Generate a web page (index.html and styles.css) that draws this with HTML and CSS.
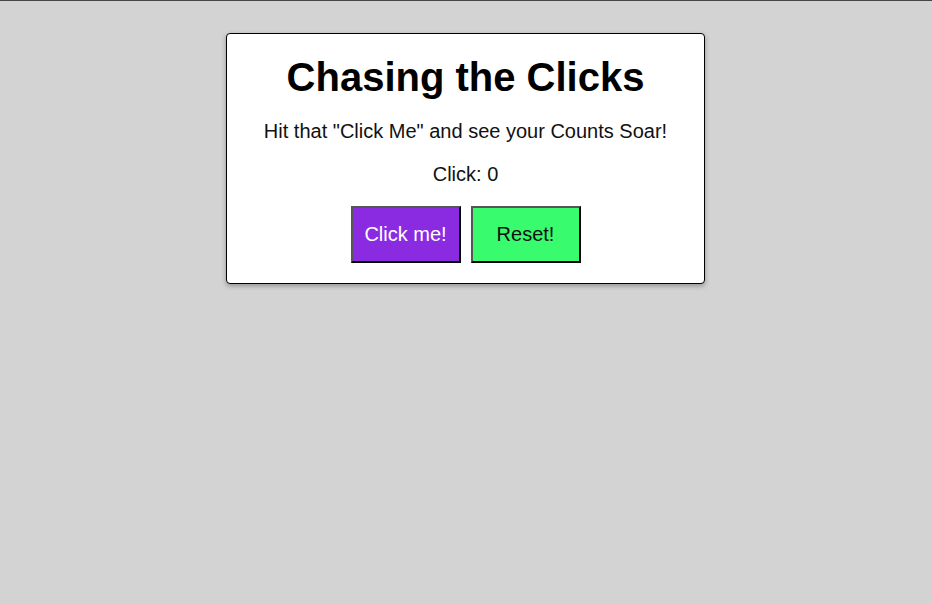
FILE: index.html
```html
<!DOCTYPE html>
<html lang="en">
<head>
<meta charset="utf-8">
<title>Chasing the Clicks</title>
<link rel="stylesheet" href="styles.css">
</head>
<body>
<div class="card">
  <h1 class="title">Chasing the Clicks</h1>
  <p class="subtitle">Hit that "Click Me" and see your Counts Soar!</p>
  <p class="count">Click: 0</p>
  <div class="actions">
    <button class="btn btn-click">Click me!</button>
    <button class="btn btn-reset">Reset!</button>
  </div>
</div>
</body>
</html>
```

FILE: styles.css
```css
html, body {
  margin: 0;
  padding: 0;
}
body {
  background: #d3d3d3;
  border-top: 1px solid #454545;
  min-height: 603px;
  font-family: "Liberation Sans", Arial, sans-serif;
}
.card {
  box-sizing: border-box;
  width: 479px;
  margin: 32px 0 0 calc(50% - 240px);
  padding: 21px 20px 20px;
  background: #fff;
  border: 1px solid #000;
  border-radius: 4px;
  box-shadow: 0 2px 5px rgba(0, 0, 0, 0.3);
  text-align: center;
}
.title {
  margin: 0;
  font-size: 40px;
  font-weight: bold;
  color: #000;
}
.subtitle, .count {
  margin: 20px 0;
  font-size: 20px;
  color: #111;
}
.actions {
  display: flex;
  justify-content: center;
  gap: 10px;
}
.btn {
  width: 110px;
  height: 57px;
  font-family: "Liberation Sans", Arial, sans-serif;
  font-size: 20px;
  border: 2px solid;
  border-color: #555 #000 #000 #555;
  padding: 0;
  cursor: pointer;
}
.btn-click {
  background: #8a2be2;
  color: #fff;
}
.btn-reset {
  background: #38fb6d;
  color: #111;
}
```
